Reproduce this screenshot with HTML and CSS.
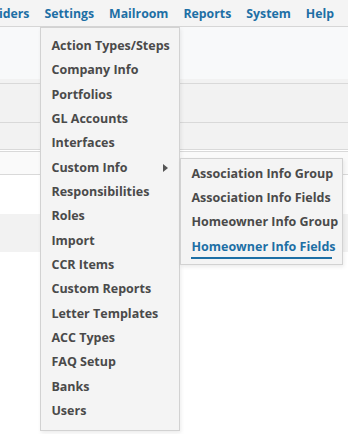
FILE: index.html
```html
<!DOCTYPE html>
<html>
<head>
    <title>Settings Menu</title>
    <link rel="stylesheet" href="styles.css">
</head>
<body>

    <div class="navbar">
        <a class="nav-link">Providers</a>
        <div class="nav-item">
            <a class="nav-link">Settings</a>
            <ul class="dropdown">
                <li>Action Types/Steps</li>
                <li>Company Info</li>
                <li>Portfolios</li>
                <li>GL Accounts</li>
                <li>Interfaces</li>
                <li class="has-sub">Custom Info <span class="arrow"></span>
                    <ul class="submenu">
                        <li>Association Info Group</li>
                        <li>Association Info Fields</li>
                        <li>Homeowner Info Group</li>
                        <li class="hover">Homeowner Info Fields</li>
                    </ul>
                </li>
                <li>Responsibilities</li>
                <li>Roles</li>
                <li>Import</li>
                <li>CCR Items</li>
                <li>Custom Reports</li>
                <li>Letter Templates</li>
                <li>ACC Types</li>
                <li>FAQ Setup</li>
                <li>Banks</li>
                <li>Users</li>
            </ul>
        </div>
        <a class="nav-link">Mailroom</a>
        <a class="nav-link">Reports</a>
        <a class="nav-link">System</a>
        <a class="nav-link">Help</a>
    </div>

    <div class="page-header"></div>
    <div class="band band-tall"></div>
    <div class="band band-short"></div>
    <div class="filter-row"></div>
    <div class="row-white"></div>
    <div class="row-grey"></div>
    <div class="filler"></div>

</body>
</html>
```

FILE: styles.css
```css
body {
    margin: 0;
    font-family: "Open Sans", Arial, sans-serif;
    background: #fff;
}
.navbar {
    height: 27px;
    background-color: #f4f4f4;
    border-bottom: 1px solid #d6d6d6;
    display: flex;
    align-items: center;
    gap: 15px;
    margin-left: -29px;
    padding-top: 1px;
    box-sizing: border-box;
    white-space: nowrap;
}
.nav-item {
    position: relative;
}
.nav-link {
    color: #1d6fa5;
    font-size: 12.3px;
    font-weight: 700;
    display: block;
}
.page-header {
    height: 52px;
    background: #f8f9fa;
    border-bottom: 4px solid #f2f2f2;
}
.band {
    background: #f2f2f2;
    border-top: 1px solid #d9d9d9;
}
.band-tall { height: 38px; }
.band-short { height: 26px; border-bottom: 1px solid #d9d9d9; }
.filter-row {
    height: 22px;
    background: #fafafa;
    border-top: 1px solid #d9d9d9;
    border-bottom: 1px solid #d9d9d9;
    margin-top: 1px;
}
.row-white { height: 39px; background: #fff; }
.row-grey { height: 38px; background: #f2f2f2; }
.filler { height: 200px; }

.dropdown,
.submenu {
    list-style: none;
    margin: 0;
    position: absolute;
    background: #f4f4f4;
    border: 1px solid #d2d2d2;
    box-shadow: 1px 2px 4px rgba(0, 0, 0, 0.08);
    z-index: 10;
}
.dropdown {
    top: 22px;
    left: -4px;
    width: 118px;
    padding: 6px 10px 6px 10px;
}
.dropdown li,
.submenu li {
    color: #4a4a4a;
    font-size: 12.5px;
    font-weight: 700;
    line-height: 24.35px;
    white-space: nowrap;
}
.has-sub {
    position: relative;
}
.arrow {
    position: absolute;
    right: 1px;
    top: 8px;
    width: 0;
    height: 0;
    border-top: 4px solid transparent;
    border-bottom: 4px solid transparent;
    border-left: 5px solid #555;
}
.submenu {
    top: 2px;
    left: 129px;
    padding: 3px 10px 5px 10px;
    width: 141px;
}
.submenu li.hover {
    color: #1d6fa5;
    line-height: 20px;
    margin-top: 2px;
    border-bottom: 2px solid #1d6fa5;
}
```
